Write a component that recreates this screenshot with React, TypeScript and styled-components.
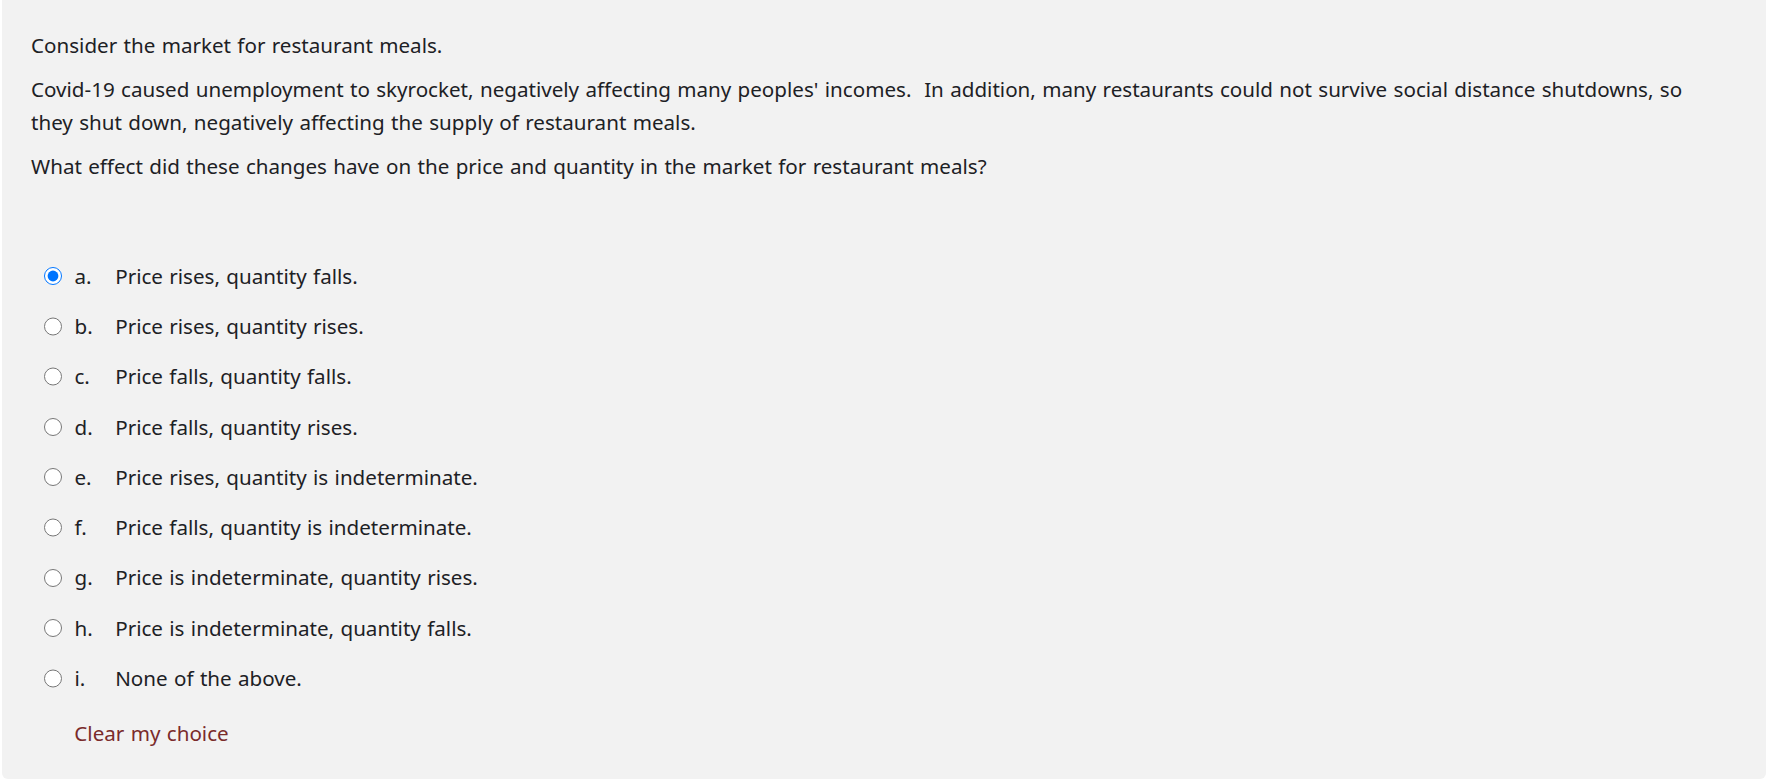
import React, { useState } from "react";
import styled, { createGlobalStyle } from "styled-components";

const GlobalStyle = createGlobalStyle`
  html, body { margin: 0; padding: 0; background: #ffffff; }
  body { font-family: "Noto Sans", "Open Sans", sans-serif; }
`;

const Panel = styled.div`
  margin: 0 0 2px 2px;
  background: #f2f2f2;
  border-radius: 0 0 6px 6px;
  padding: 29px 60px 29px 29px;
  color: #1d2125;
  font-family: "Noto Sans", "Open Sans", sans-serif;
  font-size: 20.6px;
  word-spacing: 1px;
  line-height: 32.7px;
`;

const QText = styled.div`
  margin-bottom: 68.5px;
`;

const Para = styled.p`
  margin: 0 0 11.3px 0;
  &:last-child { margin-bottom: 0; }
`;

const Answers = styled.div`
  display: flex;
  flex-direction: column;
`;

const Row = styled.label`
  display: flex;
  align-items: center;
  height: 50.3px;
  padding-left: 12.7px;
  cursor: pointer;
`;

const Radio = styled.input`
  width: 18.5px;
  height: 18.5px;
  margin: 0 12.3px 0 0;
  flex: none;
`;

const Letter = styled.span`
  width: 40.7px;
  flex: none;
`;

const Clear = styled.a`
  display: inline-block;
  margin: 13.5px 0 0 43.3px;
  color: #7a2b2b;
  text-decoration: none;
  cursor: pointer;
`;

const options = [
  ["a.", "Price rises, quantity falls."],
  ["b.", "Price rises, quantity rises."],
  ["c.", "Price falls, quantity falls."],
  ["d.", "Price falls, quantity rises."],
  ["e.", "Price rises, quantity is indeterminate."],
  ["f.", "Price falls, quantity is indeterminate."],
  ["g.", "Price is indeterminate, quantity rises."],
  ["h.", "Price is indeterminate, quantity falls."],
  ["i.", "None of the above."],
];

export default function App() {
  const [choice, setChoice] = useState<number | null>(0);
  return (
    <>
      <GlobalStyle />
      <Panel>
        <QText>
          <Para>Consider the market for restaurant meals.</Para>
          <Para>
            Covid-19 caused unemployment to skyrocket, negatively affecting many peoples' incomes.{"\u00a0 "}In
            addition, many restaurants could not survive social distance shutdowns, so they shut down, negatively
            affecting the supply of restaurant meals.
          </Para>
          <Para>What effect did these changes have on the price and quantity in the market for restaurant meals?</Para>
        </QText>
        <Answers>
          {options.map(([l, t], i) => (
            <Row key={l}>
              <Radio
                type="radio"
                name="q"
                checked={choice === i}
                onChange={() => setChoice(i)}
              />
              <Letter>{l}</Letter>
              <span>{t}</span>
            </Row>
          ))}
        </Answers>
        <Clear onClick={() => setChoice(null)}>Clear my choice</Clear>
      </Panel>
    </>
  );
}
